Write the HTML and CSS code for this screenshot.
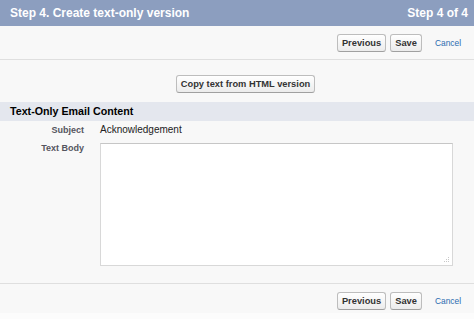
FILE: index.html
```html
<!DOCTYPE html>
<html lang="en">
<head>
    <meta charset="UTF-8">
    <title>Step 4. Create text-only version</title>
    <link rel="stylesheet" href="styles.css">
</head>
<body>
    <div class="page">
        <div class="header">
            <span class="header-title">Step 4. Create text-only version</span>
            <span class="header-step">Step 4 of 4</span>
        </div>

        <div class="toolbar">
            <button class="btn">Previous</button>
            <button class="btn">Save</button>
            <a href="#" class="cancel">Cancel</a>
        </div>

        <div class="copy-row">
            <button class="btn">Copy text from HTML version</button>
        </div>

        <div class="section-title">Text-Only Email Content</div>

        <div class="fields">
            <div class="label">Subject</div>
            <div class="value">Acknowledgement</div>

            <div class="label">Text Body</div>
            <div class="body-wrap">
                <textarea class="body-input"></textarea>
                <!-- resize grip -->
                <svg class="grip" width="6" height="6" viewBox="0 0 6 6">
                    <rect x="4" y="0" width="1" height="1" fill="#c8c8c8"/>
                    <rect x="4" y="2" width="1" height="1" fill="#c8c8c8"/>
                    <rect x="2" y="2" width="1" height="1" fill="#c8c8c8"/>
                    <rect x="4" y="4" width="1" height="1" fill="#c8c8c8"/>
                    <rect x="2" y="4" width="1" height="1" fill="#c8c8c8"/>
                    <rect x="0" y="4" width="1" height="1" fill="#c8c8c8"/>
                </svg>
            </div>
        </div>

        <div class="toolbar toolbar-bottom">
            <button class="btn">Previous</button>
            <button class="btn">Save</button>
            <a href="#" class="cancel">Cancel</a>
        </div>
    </div>
</body>
</html>
```

FILE: styles.css
```css
body {
    margin: 0;
    background: #fcfcfc;
    font-family: 'Liberation Sans', Arial, sans-serif;
    color: #000;
}
.page {
    background: #f8f8f8;
    padding-bottom: 3px;
}
.header {
    display: flex;
    justify-content: space-between;
    align-items: center;
    height: 26px;
    padding: 0 6px 0 10px;
    background: #8c9ebf;
    color: #fff;
    font-weight: bold;
    font-size: 12px;
}
.toolbar {
    display: flex;
    justify-content: flex-end;
    align-items: center;
    gap: 4px;
    padding: 8px 13px 7px 0;
    border-bottom: 1px solid #dfdfdf;
}
.toolbar-bottom {
    border-bottom: none;
    border-top: 1px solid #dfdfdf;
    padding: 8px 13px 0 0;
}
.btn {
    height: 18px;
    padding: 0 4px;
    border: 1px solid #bdbdbd;
    border-bottom-color: #a0a0a0;
    border-radius: 3px;
    background: linear-gradient(#ffffff, #ececec);
    color: #333;
    font-family: 'Liberation Sans', Arial, sans-serif;
    font-weight: bold;
    font-size: 9.3px;
}
.cancel {
    margin-left: 9px;
    color: #2a6cb0;
    font-size: 8.4px;
    text-decoration: none;
}
.copy-row {
    display: flex;
    justify-content: center;
    padding: 15px 0 9px 17px;
}
.section-title {
    height: 19px;
    line-height: 19px;
    padding-left: 10px;
    background: #e4e7ee;
    font-weight: bold;
    font-size: 10.7px;
}
.fields {
    display: grid;
    grid-template-columns: 84px 353px;
    column-gap: 16px;
    row-gap: 4px;
    padding: 2px 0 17px;
}
.label {
    text-align: right;
    line-height: 14px;
    color: #55555f;
    font-weight: bold;
    font-size: 9px;
}
.value {
    line-height: 14px;
    font-size: 10px;
    color: #222;
}
.body-wrap {
    position: relative;
    height: 123px;
    margin-top: 2px;
}
.body-input {
    display: block;
    width: 100%;
    height: 100%;
    margin: 0;
    box-sizing: border-box;
    border: 1px solid #d8d8d8;
    border-top-color: #c6c6c6;
    background: #fff;
    resize: none;
}
.grip {
    position: absolute;
    right: 3px;
    bottom: 3px;
}
```
